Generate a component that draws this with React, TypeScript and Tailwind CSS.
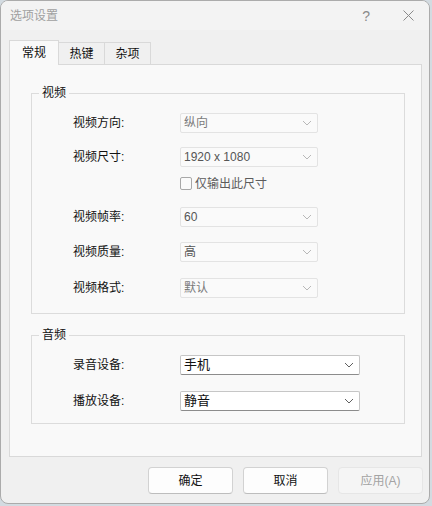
import { ReactNode } from "react";

const FONT = "font-['Liberation_Sans','Noto_Sans_CJK_SC',sans-serif]";

function Chevron({ dark }: { dark?: boolean }) {
  return (
    <svg width="10" height="6" viewBox="0 0 10 6" className="shrink-0">
      <polyline
        points="1,1 5,5 9,1"
        fill="none"
        stroke={dark ? "#606060" : "#b8b8b8"}
        strokeWidth="1"
      />
    </svg>
  );
}

function FlatCombo({ value, muted }: { value: string; muted?: boolean }) {
  return (
    <div className="w-[138px] h-[20px] flex items-center justify-between pl-[3px] pr-[5px] bg-[#fafafa] border border-[#e3e3e3] rounded-[2px]">
      <span className={`text-[12px] leading-[16px] ${muted ? "text-[#7a7a7a]" : "text-[#555]"}`}>{value}</span>
      <Chevron />
    </div>
  );
}

function Combo({ value }: { value: string }) {
  return (
    <div className="w-[180px] h-[20px] flex items-center justify-between pl-[3px] pr-[5px] bg-white border border-[#c6c6c6] border-b-[#8c8c8c] rounded-[2px]">
      <span className="text-[13px] leading-[16px] text-[#111]">{value}</span>
      <Chevron dark />
    </div>
  );
}

function Row({ label, className = "", children }: { label: string; className?: string; children: ReactNode }) {
  return (
    <div className={`flex items-center h-[20px] pl-[41px] ${className}`}>
      <span className="w-[107px] text-[12px] leading-[16px] text-[#111]">{label}</span>
      {children}
    </div>
  );
}

function Group({ title, className = "", children }: { title: string; className?: string; children: ReactNode }) {
  return (
    <div className={`relative ml-[21px] w-[374px] border border-[#dcdcdc] ${className}`}>
      <span className="absolute left-[7px] -top-[9px] px-[3px] bg-[#f9f9f9] text-[12px] leading-[16px] text-[#111]">
        {title}
      </span>
      {children}
    </div>
  );
}

function Button({ label, disabled }: { label: string; disabled?: boolean }) {
  return (
    <button
      disabled={disabled}
      className={`w-[85px] h-[27px] rounded-[4px] border text-[12px] leading-[16px] ${
        disabled
          ? "bg-[#f5f5f5] border-[#e6e6e6] text-[#a3a3a3]"
          : "bg-[#fdfdfd] border-[#d2d2d2] border-b-[#bdbdbd] text-[#111]"
      }`}
    >
      {label}
    </button>
  );
}

export default function App() {
  return (
    <div className={`w-[432px] h-[506px] bg-[#d3dbe1] ${FONT}`}>
      <div className="w-[430px] h-[504px] rounded-[8px] border border-[#ababab] bg-[#f0f0f0] overflow-hidden flex flex-col">
        {/* title bar */}
        <div className="h-[29px] shrink-0 flex items-center bg-[#f3f3f3] pl-[9px]">
          <span className="text-[12px] leading-[16px] text-[#a0a0a0]">选项设置</span>
          <span className="ml-auto mr-[33px] text-[14px] leading-[16px] text-[#8a8a8a]">?</span>
          <svg width="11" height="11" viewBox="0 0 11 11" className="mr-[15px]">
            <path d="M0.5 0.5 L10.5 10.5 M10.5 0.5 L0.5 10.5" stroke="#8a8a8a" strokeWidth="1" />
          </svg>
        </div>

        <div className="px-[8px] pt-[10px]">
          {/* tabs */}
          <div className="flex items-end">
            <div className="relative z-10 -mb-px w-[50px] h-[25px] border border-b-0 border-[#d9d9d9] bg-[#f9f9f9] flex items-center justify-center text-[12px] text-[#111]">
              常规
            </div>
            <div className="w-[46px] h-[22px] border-t border-r border-[#d9d9d9] flex items-center justify-center text-[12px] text-[#111]">
              热键
            </div>
            <div className="w-[46px] h-[22px] border-t border-r border-[#d9d9d9] flex items-center justify-center text-[12px] text-[#111]">
              杂项
            </div>
          </div>

          {/* panel */}
          <div className="w-[413px] h-[393px] border border-[#d9d9d9] bg-[#f9f9f9]">
            <Group title="视频" className="mt-[28px] h-[221px] pt-[19px]">
              <Row label="视频方向:">
                <FlatCombo value="纵向" muted />
              </Row>
              <Row label="视频尺寸:" className="mt-[14px]">
                <FlatCombo value="1920 x 1080" />
              </Row>
              <div className="flex items-center h-[13px] mt-[10px] pl-[148px]">
                <span className="w-[12px] h-[13px] rounded-[2px] border border-[#a8a8a8] bg-[#fbfbfb]" />
                <span className="ml-[3px] text-[12px] leading-[16px] text-[#5c5c5c]">仅输出此尺寸</span>
              </div>
              <Row label="视频帧率:" className="mt-[17px]">
                <FlatCombo value="60" />
              </Row>
              <Row label="视频质量:" className="mt-[15px]">
                <FlatCombo value="高" />
              </Row>
              <Row label="视频格式:" className="mt-[16px]">
                <FlatCombo value="默认" muted />
              </Row>
            </Group>

            <Group title="音频" className="mt-[21px] h-[89px] pt-[19px]">
              <Row label="录音设备:">
                <Combo value="手机" />
              </Row>
              <Row label="播放设备:" className="mt-[16px]">
                <Combo value="静音" />
              </Row>
            </Group>
          </div>

          {/* buttons */}
          <div className="w-[414px] mt-[10px] flex justify-end gap-[10px]">
            <Button label="确定" />
            <Button label="取消" />
            <Button label="应用(A)" disabled />
          </div>
        </div>
      </div>
    </div>
  );
}
